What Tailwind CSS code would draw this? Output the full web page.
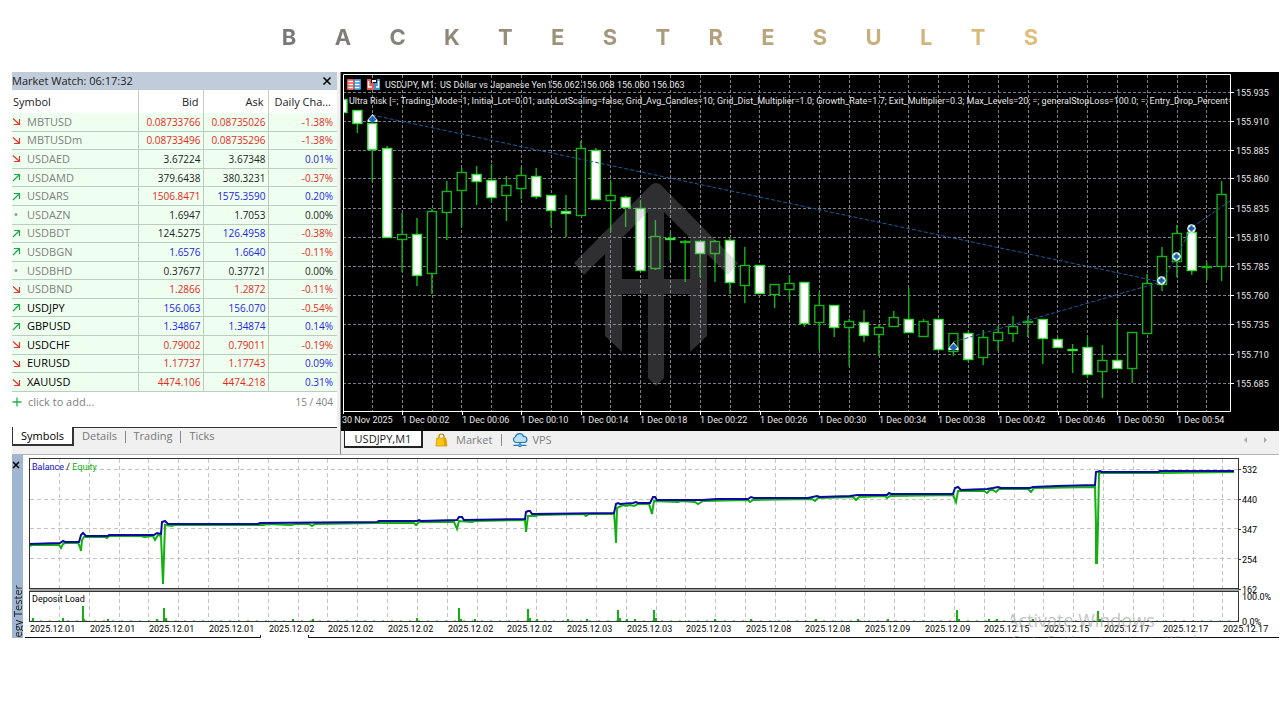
<!DOCTYPE html>
<html lang="en">
<head>
  <meta charset="UTF-8" />
  <meta name="viewport" content="width=device-width, initial-scale=1" />
  <title>Backtest Results</title>
  <script src="https://cdn.jsdelivr.net/npm/@tailwindcss/browser@4"></script>
</head>
<body class="bg-white text-black font-['Open_Sans','Noto_Sans',sans-serif]">

  <!-- Title -->
  <header class="flex h-[72px] items-center justify-center pt-[3px] pl-10">
    <h1 aria-label="Backtest results" class="flex w-[61%] justify-between bg-linear-to-r from-[#777777] to-[#e0bf7a] bg-clip-text pb-px font-['Inter',sans-serif] text-[22px] leading-8 font-bold text-transparent">
      <span>B</span><span>A</span><span>C</span><span>K</span><span>T</span><span>E</span><span>S</span><span>T</span><span>R</span><span>E</span><span>S</span><span>U</span><span>L</span><span>T</span><span>S</span>
    </h1>
  </header>

  <main class="relative overflow-hidden pr-px pl-3">
    <div class="flex border-b border-[#b4b4b4] bg-[#f0f0f0]">

      <!-- Market watch -->
      <aside class="flex w-[325px] shrink-0 flex-col">
        <div class="flex h-[18px] items-center justify-between bg-[#c0ccda] pr-[3px] text-[11px] leading-4 text-[#222]">
          <span>Market Watch: 06:17:32</span>
          <button aria-label="Close Market Watch" class="p-px">
            <svg class="size-3" viewBox="0 0 12 12" stroke="#000" stroke-width="1.6"><path d="M2.500 2.500L9.500 9.500M9.500 2.500L2.500 9.500" /></svg>
          </button>
        </div>
        <table class="h-[302px] w-full table-fixed border-collapse bg-white text-[11px] leading-4">
          <thead>
            <tr class="h-[23px] text-[#222]">
              <th class="w-[126px] border-r border-[#c4ccc4] pl-px text-left font-normal">Symbol</th>
              <th class="w-[65px] border-r border-[#c4ccc4] pr-1 text-right font-normal">Bid</th>
              <th class="w-[65px] border-r border-[#c4ccc4] pr-1 text-right font-normal">Ask</th>
              <th class="pr-[6px] text-right font-normal">Daily Cha...</th>
            </tr>
          </thead>
          <tbody id="quotes" class="bg-[#efffef]"></tbody>
        </table>
        <div class="flex h-[35px] items-start justify-between bg-white pt-[2px] pr-1 text-[11px] leading-4 text-[#808080]">
          <button class="flex items-center gap-[6px]">
            <svg class="size-[10px]" viewBox="0 0 10 10" stroke="#22b14c" stroke-width="1.300"><path d="M5 0.500V9.500M0.500 5H9.500" /></svg>
            click to add...
          </button>
          <span class="text-[10px]">15 / 404</span>
        </div>
        <nav class="flex h-[27px] items-start border-t border-[#333] text-[11px] leading-4 text-[#777]">
          <button class="-mt-px h-[19px] w-[62px] border-r-2 border-b-2 border-l border-[#333] bg-white text-black">Symbols</button>
          <button class="w-[51px]">Details</button>
          <span class="mt-[3px] h-3 w-px bg-[#888]"></span>
          <button class="w-[54px]">Trading</button>
          <span class="mt-[3px] h-3 w-px bg-[#888]"></span>
          <button class="w-[42px]">Ticks</button>
        </nav>
      </aside>
      <div class="w-1 shrink-0 border-r border-[#888]"></div>

      <!-- Price chart -->
      <section class="min-w-0 flex-1">
        <svg id="price" class="block w-full bg-black font-['Roboto','Noto_Sans',sans-serif]" viewBox="0 0 938 359" role="img" aria-label="USDJPY one minute candles"></svg>
        <nav class="flex h-[23px] items-start pl-[3px] text-[11px] leading-4 text-[#808080]">
          <button class="h-[17px] w-[79px] border-r-2 border-b-2 border-l border-[#222] bg-white text-[#222]">USDJPY,M1</button>
          <button class="ml-3 flex items-center gap-2 pt-px">
            <svg class="h-[14px] w-[13px]" viewBox="0 0 13 14"><path d="M4 6V3.500a2.500 2.500 0 0 1 5 0V6" fill="none" stroke="#b98a00" stroke-width="1.200" /><path d="M1.700 5H10.800L12 13H1z" fill="#fcc419" stroke="#d69c00" stroke-width="0.800" /><path d="M8.500 5h2.300l1.200 8H9z" fill="#e3a200" /></svg>
            Market
          </button>
          <span class="mt-[3px] ml-[9px] h-3 w-px bg-[#888]"></span>
          <button class="ml-[10px] flex items-center gap-1 pt-px">
            <svg class="h-[14px] w-4" viewBox="0 0 16 14" fill="none" stroke="#2577b5" stroke-width="1.200"><path d="M4 9.500a3 3 0 0 1-.5-5.800A4.200 4.200 0 0 1 11.500 3.500a3 3 0 0 1 .8 6z" fill="#b9e2fb" /><path d="M8 9.500V11M1.500 12.300H6M10 12.300h4.500" /><circle cx="8" cy="12.300" r="1.300" fill="#b9e2fb" /></svg>
            VPS
          </button>
          <button aria-label="Scroll left" class="mt-[5px] ml-auto h-2 w-2"><svg class="h-2 w-2" viewBox="0 0 8 8" fill="#aaa"><path d="M5 1v6L2 4z" /></svg></button>
          <button aria-label="Scroll right" class="mt-[5px] mr-[9px] ml-3 h-2 w-2"><svg class="h-2 w-2" viewBox="0 0 8 8" fill="#aaa"><path d="M2 1v6l3-3z" /></svg></button>
        </nav>
      </section>
    </div>

    <!-- Strategy tester -->
    <div class="flex">
      <div class="flex w-[11px] shrink-0 flex-col items-center justify-between overflow-hidden bg-[#a0b5d1]">
        <button aria-label="Close Strategy Tester" class="mt-1 -ml-1">
          <svg class="size-3" viewBox="0 0 12 12" stroke="#000" stroke-width="1.600"><path d="M3 3L9 9M9 3L3 9" /></svg>
        </button>
        <span class="flex h-[53px] rotate-180 justify-end text-[11px] leading-4 whitespace-nowrap text-[#222] [writing-mode:vertical-rl]">Strategy Tester</span>
      </div>
      <svg id="tester" class="block min-w-0 flex-1 font-['Roboto','Noto_Sans',sans-serif]" viewBox="0 0 1256 183" role="img" aria-label="Balance, equity and deposit load"></svg>
    </div>
    <div class="pointer-events-none absolute right-[56px] bottom-0 h-[30px] overflow-hidden whitespace-nowrap text-[#999]/60">
      <p class="-ml-1 text-[18px] leading-6">Activate Windows</p>
      <p class="text-[13px] leading-4">Go to Settings to activate Windows.</p>
    </div>
  </main>

  <script>
    // symbol, direction, bid, ask, change, colours (r, b, k), selected
    const quotes = [
      ['MBTUSD', 'down', '0.08733766', '0.08735026', '-1.38%', 'rrr', 0],
      ['MBTUSDm', 'down', '0.08733496', '0.08735296', '-1.38%', 'rrr', 0],
      ['USDAED', 'down', '3.67224', '3.67348', '0.01%', 'kkb', 0],
      ['USDAMD', 'up', '379.6438', '380.3231', '-0.37%', 'kkr', 0],
      ['USDARS', 'up', '1506.8471', '1575.3590', '0.20%', 'rbb', 0],
      ['USDAZN', 'flat', '1.6947', '1.7053', '0.00%', 'kkk', 0],
      ['USDBDT', 'up', '124.5275', '126.4958', '-0.38%', 'kbr', 0],
      ['USDBGN', 'up', '1.6576', '1.6640', '-0.11%', 'bbr', 0],
      ['USDBHD', 'flat', '0.37677', '0.37721', '0.00%', 'kkk', 0],
      ['USDBND', 'down', '1.2866', '1.2872', '-0.11%', 'rrr', 0],
      ['USDJPY', 'up', '156.063', '156.070', '-0.54%', 'bbr', 1],
      ['GBPUSD', 'up', '1.34867', '1.34874', '0.14%', 'bbb', 1],
      ['USDCHF', 'down', '0.79002', '0.79011', '-0.19%', 'rrr', 1],
      ['EURUSD', 'down', '1.17737', '1.17743', '0.09%', 'rrb', 1],
      ['XAUUSD', 'down', '4474.106', '4474.218', '0.31%', 'rrb', 1],
    ];
    const colors = { r: 'text-[#e8281e]', b: 'text-[#1c22e8]', k: 'text-[#222]' };
    const arrows = {
      up: '<path d="M1 8L7 2M2 1.500H7.500V7" fill="none" stroke="#1fa54a" stroke-width="1.200"/>',
      down: '<path d="M1 1.500L7 7M7.500 2V7.500H2" fill="none" stroke="#e0392f" stroke-width="1.200"/>',
      flat: '<circle cx="4" cy="4.500" r="1.500" fill="#999"/>',
    };
    document.getElementById('quotes').innerHTML = quotes.map(([name, dir, bid, ask, day, c, on]) => `
      <tr class="border-b border-[#bccdbc]">
        <td class="border-r border-[#bccdbc] p-0">
          <span class="flex items-center gap-[6px] ${on ? 'text-black' : 'text-[#808080]'}"><svg class="size-[9px]" viewBox="0 0 9 9">${arrows[dir]}</svg>${name}</span>
        </td>
        <td class="border-r border-[#bccdbc] p-0 pr-[2px] text-right text-[10px] ${colors[c[0]]}">${bid}</td>
        <td class="border-r border-[#bccdbc] p-0 pr-[2px] text-right text-[10px] ${colors[c[1]]}">${ask}</td>
        <td class="p-0 pr-1 text-right text-[10px] ${colors[c[2]]}">${day}</td>
      </tr>`).join('');

    const line = (x1, y1, x2, y2, rest) => `<line x1="${x1}" y1="${y1}" x2="${x2}" y2="${y2}" ${rest}/>`;

    // high, body top, body bottom, low, falling
    const candles = [
      [27,27,41,41,1],[38,38,52,61,1],[45,51,78,110,1],[74,76,166,166,1],[141,162,168,200,0],
      [146,162,204,214,1],[137,139,202,222,0],[109,119,141,168,0],[96,100,119,155,0],[94,102,110,133,1],
      [92,108,126,130,1],[104,113,124,149,0],[95,103,117,127,0],[96,104,125,127,1],[123,123,139,155,1],
      [123,139,142,165,1],[69,76,144,144,0],[76,78,128,128,1],[109,123,129,160,0],[124,125,136,155,1],
      [129,136,199,199,1],[148,164,197,198,0],[161,166,168,188,1],[168,169,171,210,0],[169,169,182,205,1],
      [168,169,182,210,0],[166,168,211,222,1],[175,193,214,231,0],[193,193,222,222,1],[212,212,223,236,0],
      [203,211,218,228,0],[210,210,252,255,1],[220,233,251,278,0],[233,233,256,265,1],[247,249,256,294,0],
      [238,250,264,270,1],[253,255,263,284,0],[239,245,255,255,0],[216,247,261,261,1],[247,249,265,265,0],
      [247,247,278,278,1],[261,261,280,284,0],[259,261,288,290,1],[258,265,286,293,0],[254,260,269,279,0],
      [244,254,262,270,0],[244,249,251,265,0],[247,247,267,292,1],[265,267,276,276,1],[272,277,278,301,1],
      [265,275,303,306,1],[273,288,300,326,0],[247,288,297,297,1],[260,260,297,311,0],[202,211,262,262,0],
      [175,184,213,219,0],[153,161,190,205,0],[160,160,199,203,1],[190,194,196,208,0],[109,122,195,209,0],
    ];
    const prices = [20, 49, 78, 106, 136, 165, 194, 223, 252, 282, 311];
    const times = ['02', '06', '10', '14', '18', '22', '26', '30', '34', '38', '42', '46', '50', '54'];
    const params = 'Ultra Risk [=; Trading_Mode=1; Initial_Lot=0.01; autoLotScaling=false; Grid_Avg_Candles=10; Grid_Dist_Multiplier=1.0; Growth_Rate=1.7; Exit_Multiplier=0.3; Max_Levels=20; =; generalStopLoss=100.0; =; Entry_Drop_Percent=1.0';

    let s = '<defs><clipPath id="plot"><rect x="2" y="3" width="887" height="336"/></clipPath></defs>';
    s += '<g stroke="#7c8088" stroke-dasharray="3 2" shape-rendering="crispEdges">';
    for (let k = 0; k < 29; k++) {
      const x = Math.round(31 + k * 29.8) + 0.5;
      s += line(x, 3, x, 339, '');
    }
    prices.forEach(y => { s += line(2, y + 0.5, 889, y + 0.5, ''); });
    s += '</g><g clip-path="url(#plot)"><g stroke="#16b316" stroke-width="1.400">';
    candles.forEach(([h, t, b, l, falling], i) => {
      const x = 1.5 + i * 14.9;
      const fill = b - t < 3 ? '#5be85b' : falling ? '#fff' : '#000';
      s += line(x, h, x, l, '');
      s += `<rect x="${x - 4.5}" y="${t + 0.5}" width="9" height="${Math.max(b - t - 1, 1)}" fill="${fill}" ${falling ? 'stroke="#3be03b"' : ''}/>`;
    });
    s += '</g>';
    // arrow watermark
    s += `<g fill="#9a9aa2" opacity="0.300"><path d="M233 191L308 115Q315 107 322 115L397 191L387 203L366 182V264L349 280V222H323V306L315 314L307 306V222H281V280L264 264V182L243 203ZM281 166V207H307V140ZM323 140V207H349V166Z" fill-rule="evenodd"/></g>`;
    s += '<g fill="none" stroke="#1b5c9c" stroke-dasharray="4 2"><path d="M31 43L820 210L835 186L850 156L889 129M612 270L820 210"/></g>';
    [[31, 47], [612, 275]].forEach(([x, y]) => {
      s += `<path d="M${x + 0.5} ${y - 5}L${x + 5.5} ${y + 1}V${y + 3}H${x - 4.5}V${y + 1}Z" fill="#fff"/><path d="M${x + 0.5} ${y - 3.5}L${x + 4.500} ${y + 0.5}L${x + 0.5} ${y + 4.500}L${x - 3.500} ${y + 0.5}Z" fill="#1c69b5"/>`;
    });
    [[820, 208], [835, 184], [850, 156]].forEach(([x, y]) => {
      s += `<circle cx="${x + 0.5}" cy="${y + 0.5}" r="4.300" fill="#fff"/><path d="M${x + 0.5} ${y - 2.5}v6M${x - 2.5} ${y + 0.5}h6" stroke="#0d65a8" stroke-width="2.400"/>`;
    });
    s += `<text x="8" y="32" fill="#e6e6e6" class="text-[9px]">${params}</text></g>`;
    s += '<path d="M2.500 342V2.500H889.500V339.500H2.500" fill="none" stroke="#fff"/>';
    // depth and one-click icons
    s += '<rect x="6" y="7" width="7" height="11" rx="1" fill="#e8574f"/><rect x="13" y="7" width="7" height="11" rx="1" fill="#3c8fd0"/><path d="M7.500 9.500H12M7.500 12.500H12M7.500 15.500H12M14 9.500H18.500M14 12.500H18.500M14 15.500H18.500" stroke="#fff" stroke-width="1.600"/>';
    s += '<path d="M26 7H30V11H33V18H26Z" fill="#e8574f"/><path d="M39 7H36V11H33V18H39Z" fill="#3c8fd0"/><path d="M27.500 9V15H31M37.500 9V15H35" fill="none" stroke="#fff" stroke-width="1.500"/><rect x="31" y="8" width="4" height="2" fill="#fff"/>';
    s += '<text x="44" y="16" fill="#e6e6e6" class="text-[9px]">USDJPY, M1:</text><text x="99" y="16" fill="#e6e6e6" class="text-[9px]">US Dollar vs Japanese Yen</text><text x="206" y="16" fill="#e6e6e6" class="text-[9px]">156.062 156.068 156.060 156.063</text>';
    prices.forEach((y, i) => {
      s += line(889, y + 0.5, 893, y + 0.5, 'stroke="#fff"');
      s += `<text x="895" y="${y + 4}" fill="#e6e6e6" class="text-[9px]">${(155.935 - i * 0.025).toFixed(3)}</text>`;
    });
    s += '<text x="1" y="351" fill="#e6e6e6" class="text-[9px]">30 Nov 2025</text>';
    times.forEach((t, i) => {
      const x = Math.round(61 + i * 59.6);
      s += line(x + 0.5, 339, x + 0.5, 343, 'stroke="#fff"');
      s += `<text x="${x}" y="351" fill="#e6e6e6" class="text-[9px]">1 Dec 00:${t}</text>`;
    });
    document.getElementById('price').innerHTML = s;

    // tester graph
    const balance = '6,89 37,88 40,86 42,87 56,87 58,80 60,78 63,81 85,81 86,80 131,80 134,78 138,79 139,67 142,66 145,69 235,69 237,68 354,67 356,66 394,66 396,65 398,66 434,65 436,62 439,62 441,65 502,64 503,57 505,56 507,56 509,59 591,58 593,49 595,48 597,49 610,48 613,47 615,48 627,48 630,42 632,42 634,45 679,45 694,44 725,44 728,42 731,43 785,43 794,41 797,42 827,41 835,40 864,40 866,38 868,39 930,39 932,33 935,32 938,35 964,34 970,33 975,32 978,33 1007,33 1010,32 1034,31 1072,30 1073,17 1077,16 1079,17 1135,17 1137,16 1211,16';
    const equity = '6,91 10,90 34,90 36,90 38,93 40,89 42,88 55,88 57,92 58,96 59,85 61,82 82,82 84,83 86,81 118,81 121,82 130,81 132,85 135,80 138,81 139,105 140,129 141,100 142,70 149,71 151,70 235,70 240,70 245,69 268,70 272,69 286,69 289,71 292,69 354,68 391,68 393,70 396,67 431,67 434,74 436,66 449,67 452,66 502,65 503,77 505,61 513,61 515,60 561,59 563,61 566,59 591,59 592,70 593,88 594,53 600,50 603,51 607,50 611,51 615,49 626,49 629,59 631,46 655,47 658,46 672,47 675,49 680,46 725,45 727,47 730,45 789,44 792,46 795,43 830,42 833,45 836,42 862,41 864,43 867,41 930,40 933,47 935,36 961,36 964,38 967,35 970,35 973,37 976,34 1005,34 1008,37 1011,33 1072,32 1073,70 1073,108 1074,108 1075,70 1076,18 1135,18 1211,17';
    const load = [[10,4],[40,4],[60,16],[61,3],[85,3],[134,3],[141,14],[143,4],[270,3],[290,3],[394,4],[436,14],[438,3],[452,3],[505,13],[507,4],[514,3],[545,3],[564,3],[595,12],[597,4],[604,3],[612,3],[631,12],[633,4],[692,3],[728,3],[793,3],[835,3],[865,3],[934,12],[936,3],[966,3],[974,3],[1010,3],[1075,11],[1077,3]];
    const days = ['01', '01', '01', '01', '02', '02', '02', '02', '02', '03', '03', '03', '08', '08', '09', '09', '15', '15', '17', '17', '17'];

    let g = '<g stroke="#c3c3c3" stroke-dasharray="4 3" shape-rendering="crispEdges">';
    for (let k = 0; k < 40; k++) {
      const x = Math.round(36 + k * 29.83) + 0.5;
      g += line(x, 4, x, 134, '') + line(x, 137, x, 166, '');
    }
    [14.5, 44.5, 73.5, 103.5].forEach(y => { g += line(7, y, 1215, y, ''); });
    g += '</g>';
    g += `<polyline points="${equity}" fill="none" stroke="#12b012" stroke-width="2"/><polyline points="${balance}" fill="none" stroke="#0a0a9c" stroke-width="2"/>`;
    g += line(8, 166, 1215, 166, 'stroke="#12b012" stroke-dasharray="2 7"');
    load.forEach(([x, h]) => { g += line(x, 167, x, 167 - h, 'stroke="#12b012" stroke-width="2"'); });
    g += '<g fill="none" stroke="#333"><rect x="6.500" y="3.500" width="1209" height="130"/><rect x="6.500" y="136.500" width="1209" height="30"/></g>';
    g += line(6, 135, 1216, 135, 'stroke="#a0a0a0" stroke-width="2"');
    g += '<text x="9" y="15" class="text-[9px]"><tspan fill="#1414c8">Balance</tspan> / <tspan fill="#12b012">Equity</tspan></text><text x="9" y="147" class="text-[9px]">Deposit Load</text>';
    [['532', 14], ['440', 44], ['347', 74], ['254', 104], ['162', 134]].forEach(([t, y]) => {
      g += line(1215, y + 0.5, 1218, y + 0.5, 'stroke="#333"') + `<text x="1219" y="${y + 4}" class="text-[9px]">${t}</text>`;
    });
    g += '<text x="1219" y="145" class="text-[9px]">100.0%</text><text x="1219" y="170" class="text-[9px]">0.0%</text>';
    days.forEach((d, i) => {
      g += `<text x="${Math.round(7 + i * 59.65)}" y="177" class="text-[9px]">2025.12.${d}</text>`;
    });
    g += '<path d="M2 182.500H237.500V180M285.500 180V182.500H1256" fill="none" stroke="#111"/>';
    document.getElementById('tester').innerHTML = g;
  </script>
</body>
</html>
